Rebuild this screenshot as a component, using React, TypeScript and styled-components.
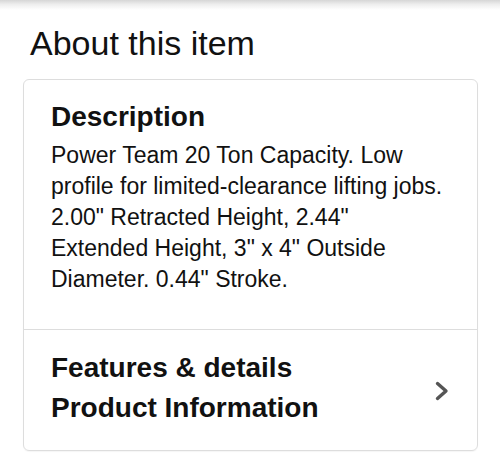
import React from "react";
import styled, { createGlobalStyle } from "styled-components";

const Global = createGlobalStyle`
  html, body { margin: 0; padding: 0; background: #ffffff; }
  body { font-family: "Liberation Sans", Arial, Helvetica, sans-serif; color: #111111; }
  * { box-sizing: border-box; }
`;

const Page = styled.div`
  width: 500px;
  height: 454px;
  display: flex;
  flex-direction: column;
  overflow: hidden;
  background: #ffffff;
`;

const TopShade = styled.div`
  height: 10px;
  flex: none;
  background: linear-gradient(to bottom, #d6d6d6 0%, #eeeeee 45%, #ffffff 100%);
`;

const Heading = styled.h2`
  margin: 13px 0 0 30px;
  font-size: 34px;
  line-height: 40px;
  font-weight: 400;
  color: #111111;
  letter-spacing: 0;
`;

const Card = styled.section`
  margin: 16px 22px 0 23px;
  border: 1px solid #dddddd;
  border-radius: 6px;
  display: flex;
  flex-direction: column;
  box-shadow: 0 1px 1px rgba(0, 0, 0, 0.04);
`;

const Section = styled.div<{ $divided?: boolean }>`
  padding: ${(p) => (p.$divided ? "18px 28px 22px 27px" : "20px 20px 34px 27px")};
  border-top: ${(p) => (p.$divided ? "1px solid #dddddd" : "none")};
`;

const Title = styled.h3`
  margin: 0;
  font-size: 28px;
  line-height: 34px;
  font-weight: 700;
  color: #111111;
`;

const Body = styled.p`
  margin: 6px 0 0 0;
  max-width: 396px;
  font-size: 23px;
  line-height: 31px;
  color: #111111;
`;

const LinkRow = styled.div`
  display: flex;
  align-items: center;
  justify-content: space-between;
`;

const LinkList = styled.div`
  display: flex;
  flex-direction: column;
`;

const LinkItem = styled.span`
  font-size: 28px;
  line-height: 40px;
  font-weight: 700;
  color: #111111;
`;

const Chevron = styled.svg`
  width: 14px;
  height: 20px;
  margin-top: 5px;
  flex: none;
`;

export default function App() {
  return (
    <>
      <Global />
      <Page>
        <TopShade />
        <Heading>About this item</Heading>
        <Card>
          <Section>
            <Title>Description</Title>
            <Body>
              Power Team 20 Ton Capacity. Low profile for limited-clearance lifting jobs. 2.00" Retracted
              Height, 2.44" Extended Height, 3" x 4" Outside Diameter. 0.44" Stroke.
            </Body>
          </Section>
          <Section $divided>
            <LinkRow>
              <LinkList>
                <LinkItem>Features &amp; details</LinkItem>
                <LinkItem>Product Information</LinkItem>
              </LinkList>
              <Chevron viewBox="0 0 14 20" aria-hidden="true">
                <polyline
                  points="2.5,2.5 11,10 2.5,17.5"
                  fill="none"
                  stroke="#555555"
                  strokeWidth="3.4"
                  strokeLinecap="round"
                  strokeLinejoin="round"
                />
              </Chevron>
            </LinkRow>
          </Section>
        </Card>
      </Page>
    </>
  );
}
